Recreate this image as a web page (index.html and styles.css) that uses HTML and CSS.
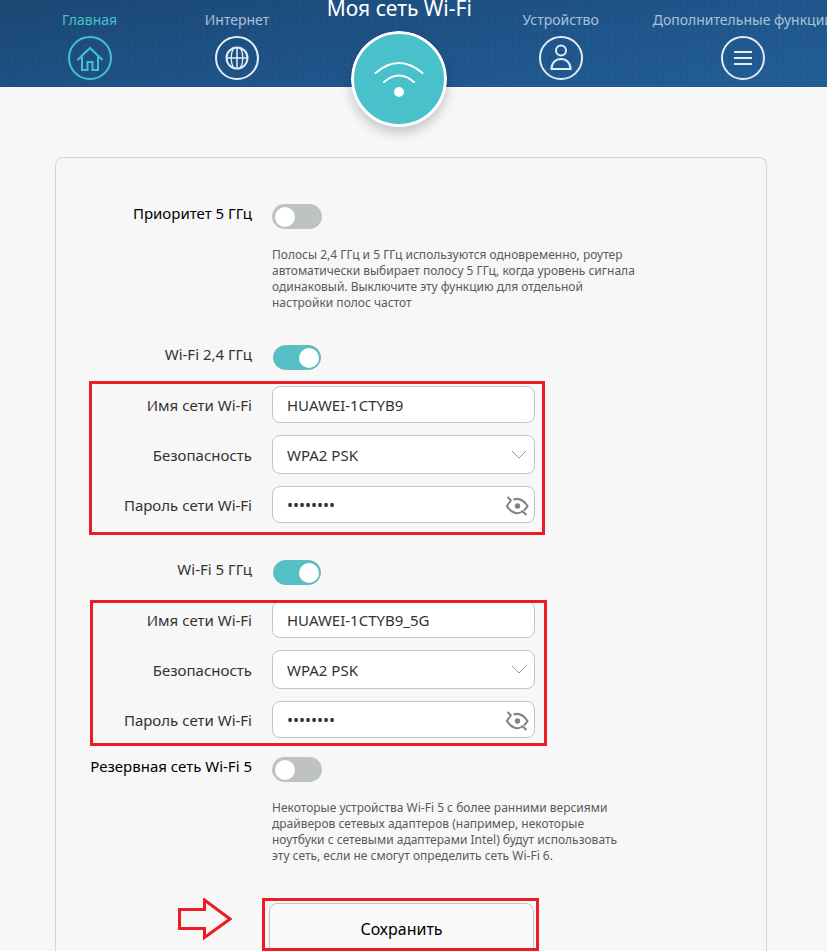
FILE: index.html
```html
<!DOCTYPE html>
<html lang="ru">
<head>
  <meta charset="UTF-8" />
  <meta name="viewport" content="width=device-width, initial-scale=1.0" />
  <title>Моя сеть Wi-Fi</title>
  <link rel="stylesheet" href="styles.css">
</head>
<body>

  <header class="header">
    <nav class="nav">
      <a href="#" class="nav-item home">
        <span>Главная</span>
        <svg class="nav-icon" viewBox="0 0 44 44">
          <circle cx="22" cy="22" r="21" />
          <path d="M9.500 24 22 12l12.500 12M14 21v13h5.500v-8h5v8H30V21" />
        </svg>
      </a>
      <a href="#" class="nav-item">
        <span>Интернет</span>
        <svg class="nav-icon" viewBox="0 0 44 44">
          <circle cx="22" cy="22" r="21" />
          <circle cx="22" cy="22" r="10.500" />
          <path d="M22 11.500v21M11.500 22h21M18.500 12c-3 6-3 14 0 20M25.500 12c3 6 3 14 0 20" stroke-width="1.500" />
        </svg>
      </a>
      <a href="#" class="nav-item current">
        <span>Моя сеть Wi-Fi</span>
        <svg class="nav-icon" viewBox="0 0 96 96">
          <circle class="disc" cx="48" cy="48" r="46.500" />
          <path d="M24.500 42q23.500-20 47 0M33 51q15-13 30 0" />
          <circle class="dot" cx="48" cy="61" r="5" />
        </svg>
      </a>
      <a href="#" class="nav-item">
        <span>Устройство</span>
        <svg class="nav-icon" viewBox="0 0 44 44">
          <circle cx="22" cy="22" r="21" />
          <circle cx="22" cy="14.500" r="5" />
          <path d="M12.500 33c0-6 4-10 9.500-10s9.500 4 9.500 10z" />
        </svg>
      </a>
      <a href="#" class="nav-item">
        <span>Дополнительные функции</span>
        <svg class="nav-icon" viewBox="0 0 44 44">
          <circle cx="22" cy="22" r="21" />
          <path d="M13 16h18M13 22h18M13 28h18" />
        </svg>
      </a>
    </nav>
  </header>

  <main class="card">
    <form class="form">

      <div class="row toggle-row">
        <label class="strong" for="priority">Приоритет 5 ГГц</label>
        <input type="checkbox" class="toggle" id="priority">
      </div>
      <p class="help">Полосы 2,4 ГГц и 5 ГГц используются одновременно, роутер автоматически выбирает полосу 5 ГГц, когда уровень сигнала одинаковый. Выключите эту функцию для отдельной настройки полос частот</p>

      <!-- 2,4 ГГц -->
      <div class="row toggle-row after-help">
        <label for="wifi24">Wi-Fi 2,4 ГГц</label>
        <input type="checkbox" class="toggle" id="wifi24" checked>
      </div>
      <div class="group group-24">
        <div class="row">
          <label for="name24">Имя сети Wi-Fi</label>
          <input type="text" class="field" id="name24" value="HUAWEI-1CTYB9">
        </div>
        <div class="row">
          <label for="sec24">Безопасность</label>
          <div class="control">
            <select class="field" id="sec24"><option>WPA2 PSK</option></select>
            <svg class="chevron" viewBox="0 0 16 10"><path d="M1 1l7 7 7-7" /></svg>
          </div>
        </div>
        <div class="row">
          <label for="pass24">Пароль сети Wi-Fi</label>
          <div class="control">
            <input type="password" class="field" id="pass24" value="12345678">
            <button type="button" class="eye" aria-label="Показать пароль">
              <svg viewBox="0 0 24 22"><path d="M2.500 2l4 4M8.500 4.500C13 3 18 4 22.500 11c-1 2-2 3-3.500 4.500M5.500 6.500C4 7.500 3 9 2 11c4 7 10 8.500 14.500 6M16.500 15.500l5 4.500" /><circle cx="12.500" cy="11" r="2.700" /></svg>
            </button>
          </div>
        </div>
      </div>

      <!-- 5 ГГц -->
      <div class="row toggle-row after-group">
        <label for="wifi5">Wi-Fi 5 ГГц</label>
        <input type="checkbox" class="toggle" id="wifi5" checked>
      </div>
      <div class="group group-5">
        <div class="row">
          <label for="name5">Имя сети Wi-Fi</label>
          <input type="text" class="field" id="name5" value="HUAWEI-1CTYB9_5G">
        </div>
        <div class="row">
          <label for="sec5">Безопасность</label>
          <div class="control">
            <select class="field" id="sec5"><option>WPA2 PSK</option></select>
            <svg class="chevron" viewBox="0 0 16 10"><path d="M1 1l7 7 7-7" /></svg>
          </div>
        </div>
        <div class="row">
          <label for="pass5">Пароль сети Wi-Fi</label>
          <div class="control">
            <input type="password" class="field" id="pass5" value="12345678">
            <button type="button" class="eye" aria-label="Показать пароль">
              <svg viewBox="0 0 24 22"><path d="M2.500 2l4 4M8.500 4.500C13 3 18 4 22.500 11c-1 2-2 3-3.500 4.500M5.500 6.500C4 7.500 3 9 2 11c4 7 10 8.500 14.500 6M16.500 15.500l5 4.500" /><circle cx="12.500" cy="11" r="2.700" /></svg>
            </button>
          </div>
        </div>
      </div>

      <div class="row toggle-row reserve">
        <label class="strong" for="reserve">Резервная сеть Wi-Fi 5</label>
        <input type="checkbox" class="toggle" id="reserve">
      </div>
      <p class="help">Некоторые устройства Wi-Fi 5 с более ранними версиями драйверов сетевых адаптеров (например, некоторые ноутбуки с сетевыми адаптерами Intel) будут использовать эту сеть, если не смогут определить сеть Wi-Fi 6.</p>

      <div class="actions">
        <svg class="arrow" viewBox="0 0 54 42"><path d="M1.500 11.500h25V2L52 21 26.500 39.500V30.500h-25z" /></svg>
        <div class="save-mark">
          <button type="submit" class="save-btn">Сохранить</button>
        </div>
      </div>

    </form>
  </main>

</body>
</html>
```

FILE: styles.css
```css
:root {
  --accent: #48c1ca;
  --mark: #ed1c24;
  --bg: #f7f7f7;
  --border: #c4c4c4;
  --text: #333333;
}

*,
*::before,
*::after {
  margin: 0;
  padding: 0;
  box-sizing: border-box;
}

body {
  display: flex;
  flex-direction: column;
  height: 100vh;
  overflow: hidden;
  font-family: "Segoe UI", "Noto Sans", "Open Sans", sans-serif;
  font-size: 15px;
  line-height: 18px;
  background: var(--bg);
  color: var(--text);
}

/* Header */
.header {
  flex: none;
  height: 87px;
  background:
    radial-gradient(circle, rgba(10, 40, 80, 0.08) 1px, transparent 2px) 0 0 / 6px 5px,
    linear-gradient(170deg, #1b4874, #1f5489 50%, #225f97);
}

.nav {
  display: grid;
  grid-template-columns: 180fr 116fr 210fr 114fr 252fr;
  width: 105%;
}

.nav-item {
  display: flex;
  flex-direction: column;
  align-items: center;
  gap: 6px;
  padding-top: 10px;
  font-size: 14px;
  line-height: 20px;
  color: #a9c2d9;
  text-decoration: none;
  white-space: nowrap;
}

.nav-icon {
  width: 44px;
  height: 44px;
  fill: none;
  stroke: #e3ebf3;
  stroke-width: 2;
}

.nav-item.home {
  color: var(--accent);
}

.nav-item.home .nav-icon {
  stroke: var(--accent);
}

.nav-item.current {
  height: 87px;
  gap: 15px;
  padding-top: 0;
  font-size: 21px;
  line-height: 16px;
  color: #ffffff;
}

.nav-item.current .nav-icon {
  flex: none;
  width: 96px;
  height: 96px;
  border-radius: 50%;
  stroke: #ffffff;
  stroke-linecap: round;
  box-shadow: 0 6px 12px rgba(0, 0, 0, 0.2);
}

.disc {
  fill: var(--accent);
  stroke-width: 3;
}

.dot {
  fill: #ffffff;
  stroke: none;
}

/* Card */
.card {
  flex: 1 0 auto;
  margin: 70px 60px 0 55px;
  padding-top: 46px;
  border: 1px solid #d3d6e2;
  border-bottom: none;
  border-radius: 8px 8px 0 0;
}

.row {
  display: grid;
  grid-template-columns: 196px 263px;
  column-gap: 20px;
  align-items: center;
}

.row label {
  text-align: right;
}

.row label.strong {
  color: #000000;
}

.toggle-row {
  height: 25px;
  align-items: start;
}

.after-help {
  margin-top: 34px;
}

.after-group {
  margin-top: 37px;
}

.reserve {
  margin-top: 19px;
}

.help {
  max-width: 580px;
  margin-top: 18px;
  padding-left: 216px;
  font-size: 12px;
  line-height: 16px;
  color: #5a5a5a;
}

.toggle {
  appearance: none;
  display: flex;
  align-items: center;
  width: 50px;
  height: 25px;
  padding: 0 3px;
  border-radius: 13px;
  background: #bec2c2;
  cursor: pointer;
}

.toggle::before {
  content: "";
  width: 20px;
  height: 20px;
  border-radius: 50%;
  background: #ffffff;
}

.toggle:checked {
  justify-content: flex-end;
  width: 48px;
  margin-left: 1px;
  padding: 0 1px;
  border: 1px solid #6fb5ba;
  background: #53c0c6;
}

/* Network settings */
.group {
  position: relative;
  display: grid;
  row-gap: 12px;
  margin-top: 16px;
}

.group::after {
  content: "";
  position: absolute;
  left: 33px;
  width: 456px;
  border: 3px solid var(--mark);
  pointer-events: none;
}

.group-24::after {
  top: -5px;
  bottom: -12px;
}

.group-5::after {
  top: -1px;
  bottom: -8px;
  left: 34px;
  width: 457px;
}

.field {
  display: block;
  width: 100%;
  height: 37px;
  padding: 0 14px;
  border: 1px solid var(--border);
  border-radius: 8px;
  background: #ffffff;
  color: var(--text);
  font: inherit;
}

select.field {
  appearance: none;
  height: 39px;
}

input[type="password"] {
  font-size: 16px;
}

.control {
  position: relative;
}

.chevron {
  position: absolute;
  top: 15px;
  right: 8px;
  width: 16px;
  height: 10px;
  fill: none;
  stroke: #999999;
  pointer-events: none;
}

.eye {
  position: absolute;
  top: 9px;
  right: 6px;
  width: 24px;
  height: 22px;
  border: none;
  background: none;
  cursor: pointer;
}

.eye svg {
  display: block;
  fill: none;
  stroke: #808285;
  stroke-width: 2;
}

.eye circle {
  fill: #808285;
  stroke: none;
}

/* Save */
.actions {
  display: flex;
  margin-top: 34px;
}

.arrow {
  width: 54px;
  height: 42px;
  margin: 0 30px 0 122px;
  fill: none;
  stroke: var(--mark);
  stroke-width: 3;
}

.save-mark {
  width: 277px;
  height: 53px;
  padding: 2px 4px 0;
  border: 3px solid var(--mark);
  overflow: hidden;
}

.save-btn {
  width: 265px;
  height: 52px;
  border: 1px solid var(--border);
  border-radius: 8px;
  background: #f9f9f9;
  color: #000000;
  font-family: inherit;
  font-size: 16px;
  cursor: pointer;
}
```
